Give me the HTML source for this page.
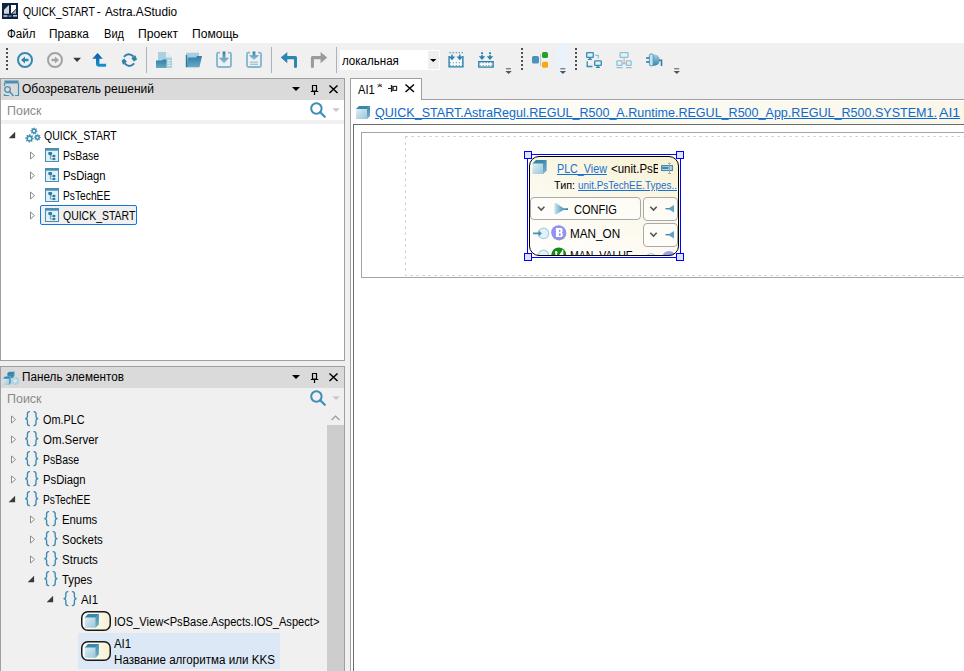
<!DOCTYPE html>
<html><head><meta charset="utf-8">
<style>
*{box-sizing:border-box}
html,body{margin:0;padding:0}
body{width:964px;height:671px;overflow:hidden;position:relative;background:#f0f0f0;font-family:"Liberation Sans",sans-serif}
.a{position:absolute}
.t{position:absolute;white-space:pre;transform-origin:0 0;font-family:"Liberation Sans",sans-serif}
svg{position:absolute;overflow:visible}
</style></head><body>
<!-- title + menu -->
<div class="a" style="left:0;top:0;width:964px;height:43px;background:#fff"></div>
<svg style="left:0;top:0" width="20" height="22">
 <rect x="2" y="3" width="16" height="16" fill="#0c2444"/>
 <polygon points="4,13.8 4,9.8 9,5 9,13.8" fill="#d3d7dd"/>
 <polygon points="11,5 16,5 16,8.8 11,13.8" fill="#ffffff"/>
 <polygon points="12.2,13.8 16,9.8 16,13.8" fill="#aab2be"/>
 <rect x="3.5" y="15.2" width="4" height="1.6" fill="#c5cad2"/>
 <rect x="8.5" y="15.5" width="3" height="1.2" fill="#9aa3b0"/>
 <rect x="13" y="15" width="4" height="1.6" fill="#c5cad2"/>
</svg>
<!-- toolbar -->
<div class="a" style="left:0;top:43px;width:964px;height:35px;background:#f0f0f0"></div>
<svg style="left:0;top:43px" width="964" height="35">
 <g fill="#505050">
  <rect x="6" y="5" width="2" height="2"/><rect x="6" y="9" width="2" height="2"/><rect x="6" y="13" width="2" height="2"/><rect x="6" y="17" width="2" height="2"/><rect x="6" y="21" width="2" height="2"/><rect x="6" y="25" width="2" height="2"/>
 </g>
 <!-- back -->
 <circle cx="25" cy="17" r="7" fill="none" stroke="#3589b3" stroke-width="2"/>
 <path d="M21,17 L25,13.5 L25,15.8 L28.5,15.8 L28.5,18.2 L25,18.2 L25,20.5 Z" fill="#2f86b0"/>
 <!-- forward -->
 <circle cx="55" cy="17" r="7" fill="none" stroke="#a3a3a3" stroke-width="2"/>
 <path d="M59,17 L55,13.5 L55,15.8 L51.5,15.8 L51.5,18.2 L55,18.2 L55,20.5 Z" fill="#a3a3a3"/>
 <path d="M73.2,14.7 L81,14.7 L77.1,18.9 Z" fill="#383838"/>
 <!-- up -->
 <defs><linearGradient id="upg" x1="0" y1="0" x2="0" y2="1"><stop offset="0" stop-color="#0a5aa0"/><stop offset="1" stop-color="#1a92d2"/></linearGradient></defs>
 <path d="M92.3,15.8 L97.6,9.9 L102.8,15.8 L99.4,15.8 L99.4,20.8 L106.1,20.8 L106.1,23.7 L99,23.7 Q96,23.7 96,20.8 L96,15.8 Z" fill="url(#upg)"/>
 <!-- refresh -->
 <path d="M123.9,13.9 Q128.5,8.8 133.6,13.6" fill="none" stroke="#2f80aa" stroke-width="2"/>
 <path d="M131.3,15.2 L135.3,12.3 L137.1,16.6 L134,18.6 Z" fill="#2f80aa"/>
 <path d="M134.2,20.3 Q129.5,25.5 124.6,20.4" fill="none" stroke="#2f80aa" stroke-width="2"/>
 <path d="M126.9,18.8 L122.9,21.7 L121.7,17.4 L124.2,15.5 Z" fill="#2f80aa"/>
 <rect x="146" y="4" width="1" height="26" fill="#aab2bf"/>
 <!-- new -->
 <path d="M158,9 L166,9 L172,14.5 L172,25 L158,25 Z" fill="#abd0e0"/>
 <path d="M166,9 L172,14.5 L166,14.5 Z" fill="#e2eff5"/>
 <rect x="167.5" y="17" width="3" height="1" fill="#e8f2f6"/><rect x="167.5" y="19.5" width="3" height="1" fill="#e8f2f6"/><rect x="167.5" y="22" width="3" height="1" fill="#e8f2f6"/>
 <defs>
  <linearGradient id="fg" x1="0" y1="0" x2="0" y2="1"><stop offset="0" stop-color="#2f7ea6"/><stop offset="1" stop-color="#68a9c6"/></linearGradient>
  <linearGradient id="fg2" x1="0" y1="0" x2="0" y2="1"><stop offset="0" stop-color="#2f7ea6"/><stop offset="1" stop-color="#9ac6d9"/></linearGradient>
  <linearGradient id="cube" x1="0" y1="0" x2="1" y2="1"><stop offset="0" stop-color="#eaf5f9"/><stop offset="1" stop-color="#8ec0d5"/></linearGradient>
  <linearGradient id="cubes" x1="0" y1="0" x2="0" y2="1"><stop offset="0" stop-color="#3b87ab"/><stop offset="1" stop-color="#7fb5cd"/></linearGradient>
 </defs>
 <path d="M156,17.5 L162,17.5 L163,16.5 L166.5,16.5 L166.5,25 L156,25 Z" fill="url(#fg)"/>
 <!-- open folder -->
 <path d="M186,9.7 L199,9.7 L199,24.2 L186,24.2 Z" fill="#a7cddf"/>
 <path d="M188,14.5 L196,14.5 L197,13 L202,13 L199.5,24.2 L186.5,24.2 Z" fill="url(#fg)"/>
 <rect x="185.8" y="12" width="1.4" height="12.2" fill="#2a78a0"/>
 <!-- save -->
 <path d="M220,9.6 L218.5,9.6 Q217,9.6 217,11.1 L217,22.5 Q217,24 218.5,24 L229.5,24 Q231,24 231,22.5 L231,11.1 Q231,9.6 229.5,9.6 L228,9.6" stroke="#86b8cf" stroke-width="1.9" fill="none"/>
 <path d="M222.6,8.5 L225.4,8.5 L225.4,14.8 L229,14.8 L224,20.5 L219,14.8 L222.6,14.8 Z" fill="url(#fg2)"/>
 <!-- save all -->
 <path d="M250,9.6 L248.5,9.6 Q247,9.6 247,11.1 L247,22.5 Q247,24 248.5,24 L259.5,24 Q261,24 261,22.5 L261,11.1 Q261,9.6 259.5,9.6 L258,9.6" stroke="#86b8cf" stroke-width="1.9" fill="none"/>
 <path d="M252.6,8.5 L255.4,8.5 L255.4,12.3 L259,12.3 L254,17 L249,12.3 L252.6,12.3 Z" fill="url(#fg2)"/>
 <rect x="250" y="18.7" width="8" height="0.9" fill="#7fb3cb"/><rect x="250" y="20.8" width="8" height="0.9" fill="#7fb3cb"/>
 <rect x="271" y="4" width="1" height="26" fill="#aab2bf"/>
 <!-- undo -->
 <path d="M280.7,14.5 L287.3,9 L287.3,13 L295.5,13 Q297,13 297,14.5 L297,23.5 Q297,25 295.5,25 Q294,25 294,23.5 L294,16.2 L287.3,16.2 L287.3,20.2 Z" fill="#2e86b0"/>
 <!-- redo -->
 <path d="M327.2,14.5 L320.6,9 L320.6,13 L312.4,13 Q310.9,13 310.9,14.5 L310.9,23.5 Q310.9,25 312.4,25 Q313.9,25 313.9,23.5 L313.9,16.2 L320.6,16.2 L320.6,20.2 Z" fill="#9a9a9a"/>
 <rect x="336" y="4" width="1" height="26" fill="#aab2bf"/>
 <!-- combo -->
 <rect x="340" y="7" width="100" height="20" fill="#fff"/>
 <rect x="428" y="8" width="11" height="18" fill="#efefef"/>
 <path d="M430,16 L436.4,16 L433.2,19 Z" fill="#000"/>
 <!-- import icons -->
 <rect x="449.8" y="17.5" width="12.4" height="5.7" fill="#fafcfd"/>
 <rect x="479.4" y="19.3" width="13.1" height="4.1" fill="#fafcfd"/>
 <g fill="#5f9fc0"><rect x="449.50" y="8.9" width="1.4" height="1.4"/><rect x="452.50" y="8.9" width="1.4" height="1.4"/><rect x="455.60" y="8.9" width="1.4" height="1.4"/><rect x="458.60" y="8.9" width="1.4" height="1.4"/><rect x="461.60" y="8.9" width="1.4" height="1.4"/><rect x="449.60" y="19.1" width="1.2" height="1.2"/><rect x="449.60" y="22.0" width="1.2" height="1.2"/><rect x="452.60" y="19.1" width="1.2" height="1.2"/><rect x="452.60" y="22.0" width="1.2" height="1.2"/><rect x="455.70" y="19.1" width="1.2" height="1.2"/><rect x="455.70" y="22.0" width="1.2" height="1.2"/><rect x="458.70" y="19.1" width="1.2" height="1.2"/><rect x="458.70" y="22.0" width="1.2" height="1.2"/><rect x="461.70" y="19.1" width="1.2" height="1.2"/><rect x="461.70" y="22.0" width="1.2" height="1.2"/><rect x="479.50" y="19.1" width="1.2" height="1.2"/><rect x="479.50" y="22.0" width="1.2" height="1.2"/><rect x="482.50" y="19.1" width="1.2" height="1.2"/><rect x="482.50" y="22.0" width="1.2" height="1.2"/><rect x="485.40" y="19.1" width="1.2" height="1.2"/><rect x="485.40" y="22.0" width="1.2" height="1.2"/><rect x="488.20" y="19.1" width="1.2" height="1.2"/><rect x="488.20" y="22.0" width="1.2" height="1.2"/><rect x="491.30" y="19.1" width="1.2" height="1.2"/><rect x="491.30" y="22.0" width="1.2" height="1.2"/></g>
 <g fill="#2d7fab">
  <path d="M448.4,13 L449.8,13 L449.8,23.2 L462.2,23.2 L462.2,13 L463.6,13 L463.6,24.6 L448.4,24.6 Z"/>
  <path d="M451.3,11.5 L452.7,11.5 L452.7,13.5 L455.2,13.5 L452,17.3 L448.8,13.5 L451.3,13.5 Z"/>
  <path d="M459.1,11.5 L460.5,11.5 L460.5,13.5 L463,13.5 L459.8,17.3 L456.6,13.5 L459.1,13.5 Z"/>
  <rect x="481" y="9.3" width="2" height="1.8"/><rect x="489" y="9.3" width="2" height="1.8"/>
  <path d="M481.3,12 L482.7,12 L482.7,13.3 L485.2,13.3 L482,16.9 L478.8,13.3 L481.3,13.3 Z"/>
  <path d="M489.3,12 L490.7,12 L490.7,13.3 L493.2,13.3 L490,16.9 L486.8,13.3 L489.3,13.3 Z"/>
  <path d="M478.1,18 L493.8,18 L493.8,24.7 L478.1,24.7 Z M479.4,19.3 L479.4,23.4 L492.5,23.4 L492.5,19.3 Z"/>
 </g>
 <!-- overflow chevrons -->
 <g fill="#555">
  <rect x="506" y="25.3" width="5" height="1"/><path d="M505.4,28 L511.8,28 L508.6,30.9 Z"/>
 </g>
 <g fill="#505050">
  <rect x="521" y="5" width="2" height="2"/><rect x="521" y="9" width="2" height="2"/><rect x="521" y="13" width="2" height="2"/><rect x="521" y="17" width="2" height="2"/><rect x="521" y="21" width="2" height="2"/><rect x="521" y="25" width="2" height="2"/>
 </g>
 <rect x="532" y="13" width="7" height="7.5" rx="1.5" fill="#4c93ba"/>
 <rect x="540" y="11" width="0.8" height="12" fill="#bbb"/>
 <rect x="542" y="9" width="6" height="6" rx="1.5" fill="#23a12d"/>
 <rect x="542" y="18.8" width="6" height="6" rx="1.5" fill="#f7a914"/>
 <rect x="556.5" y="1" width="11" height="32.5" rx="2" fill="#eaf2fb"/>
 <g fill="#555">
  <rect x="560.3" y="25.3" width="5" height="1"/><path d="M559.7,28 L566.1,28 L562.9,30.9 Z"/>
 </g>
 <g fill="#505050">
  <rect x="575" y="5" width="2" height="2"/><rect x="575" y="9" width="2" height="2"/><rect x="575" y="13" width="2" height="2"/><rect x="575" y="17" width="2" height="2"/><rect x="575" y="21" width="2" height="2"/><rect x="575" y="25" width="2" height="2"/>
 </g>
 <!-- network 1 -->
 <g>
  <rect x="586.7" y="9.7" width="6.6" height="4.6" rx="0.6" fill="#def1f9" stroke="#3a89b2" stroke-width="1.3"/>
  <rect x="589.2" y="14.8" width="1.6" height="1.4" fill="#3a89b2"/><rect x="587.8" y="15.8" width="4.2" height="1.2" rx="0.5" fill="#3a89b2"/>
  <rect x="594.7" y="17.8" width="6.6" height="4.6" rx="0.6" fill="#def1f9" stroke="#3a89b2" stroke-width="1.3"/>
  <rect x="597.2" y="22.9" width="1.6" height="1.4" fill="#3a89b2"/><rect x="595.8" y="23.8" width="4.2" height="1.2" rx="0.5" fill="#3a89b2"/>
  <path d="M595.2,12.4 L598.3,12.4 L598.3,15.6" stroke="#8fbfd5" stroke-width="1.2" fill="none"/>
  <path d="M587.2,18.3 L587.2,23.5 L592.5,23.5" stroke="#3a89b2" stroke-width="1.3" fill="none"/>
 </g>
 <!-- network 2 -->
 <g>
  <rect x="620.1" y="9.7" width="7.9" height="4.6" rx="0.6" fill="#e2f3fa" stroke="#8fc0d8" stroke-width="1.3"/>
  <path d="M624.1,14.7 L624.1,20.6 M622.4,20.6 L625.8,20.6" stroke="#c9b3ab" stroke-width="1.2"/>
  <rect x="616.9" y="17.8" width="5.1" height="4.6" rx="0.6" fill="#e2f3fa" stroke="#8fc0d8" stroke-width="1.3"/>
  <rect x="626.4" y="17.8" width="4.7" height="4.6" rx="0.6" fill="#e2f3fa" stroke="#8fc0d8" stroke-width="1.3"/>
  <rect x="616.3" y="24" width="6.3" height="1.2" rx="0.5" fill="#8fc0d8"/><rect x="625.8" y="24" width="5.9" height="1.2" rx="0.5" fill="#8fc0d8"/>
 </g>
 <!-- plug -->
 <defs><linearGradient id="plugg" x1="0" y1="0" x2="0" y2="1"><stop offset="0" stop-color="#a9d2e3"/><stop offset="1" stop-color="#3583ad"/></linearGradient></defs>
 <rect x="646.1" y="14.1" width="5.6" height="1.8" fill="#3a89b2"/><rect x="646.1" y="18" width="5.6" height="1.8" fill="#3a89b2"/>
 <path d="M652.5,10.9 Q659.5,10.9 659.8,17 Q659.5,22.9 652.5,22.9 Z" fill="url(#plugg)"/>
 <rect x="649.4" y="10.9" width="3.8" height="12" rx="1.6" fill="#c4e2ee" stroke="#4a93b8" stroke-width="0.9"/>
 <path d="M659,17.2 L661.5,17.2 L661.5,22.9" stroke="#2f80aa" stroke-width="1.6" fill="none"/>
 <g fill="#555">
  <rect x="674.2" y="25.3" width="5" height="1"/><path d="M673.6,28 L680,28 L676.8,30.9 Z"/>
 </g>
</svg>

<!-- Solution explorer panel -->
<div class="a" style="left:0;top:78px;width:345px;height:283px;border:1px solid #a0a0a0;background:#fff"></div>
<div class="a" style="left:1px;top:79px;width:343px;height:21px;background:#dadada"></div>
<div class="a" style="left:1px;top:120px;width:343px;height:4px;background:#f0f0f0"></div>
<!-- Toolbox panel -->
<div class="a" style="left:0;top:366px;width:345px;height:320px;border:1px solid #a0a0a0;background:#f0f0f0"></div>
<div class="a" style="left:1px;top:367px;width:343px;height:21px;background:#dadada"></div>
<div class="a" style="left:327px;top:425px;width:17px;height:260px;background:#cdcdcd"></div>
<svg style="left:0;top:0" width="964" height="671">
 <!-- explorer header icon -->
 <path d="M4.5,82 L18.5,82" stroke="#4a90b3" stroke-width="3"/>
 <path d="M4.5,83 L4.5,86 M18.5,83 L18.5,95.5 L15,95.5 M4.5,94 L4.5,95.5 L9,95.5" stroke="#4a90b3" stroke-width="1.2" fill="none"/>
 <circle cx="7.5" cy="89.5" r="2.8" fill="none" stroke="#4a90b3" stroke-width="1.3"/>
 <path d="M9.5,91.5 L13.5,96" stroke="#4a90b3" stroke-width="1.5"/>
 <!-- header buttons -->
 <path d="M292,87 L300,87 L296,91 Z" fill="#000"/>
 <path d="M312,85.5 L317,85.5 M312.5,85.5 L312.5,91 L316.5,91 L316.5,85.5 M310.8,91.5 L318.3,91.5 M314.5,91.5 L314.5,95" stroke="#000" stroke-width="1.2" fill="none"/>
 <path d="M329.5,85.5 L337.5,93 M337.5,85.5 L329.5,93" stroke="#000" stroke-width="1.5"/>
 <!-- search -->
 <circle cx="316.4" cy="108.5" r="5.2" fill="none" stroke="#3a8fb5" stroke-width="2"/>
 <path d="M320.2,112.3 L324.8,116.8" stroke="#3a8fb5" stroke-width="2.2" stroke-linecap="round"/>
 <path d="M332.3,108.2 L339.9,108.2 L336.1,112 Z" fill="#c8c8c8"/>
 <!-- toolbox header -->
 <path d="M292,375 L300,375 L296,379 Z" fill="#000"/>
 <path d="M312,373.5 L317,373.5 M312.5,373.5 L312.5,379 L316.5,379 L316.5,373.5 M310.8,379.5 L318.3,379.5 M314.5,379.5 L314.5,383" stroke="#000" stroke-width="1.2" fill="none"/>
 <path d="M329.5,373.5 L337.5,381 M337.5,373.5 L329.5,381" stroke="#000" stroke-width="1.5"/>
 <circle cx="316.4" cy="396.5" r="5.2" fill="none" stroke="#3a8fb5" stroke-width="2"/>
 <path d="M320.2,400.3 L324.8,404.8" stroke="#3a8fb5" stroke-width="2.2" stroke-linecap="round"/>
 <path d="M332.3,396.2 L339.9,396.2 L336.1,400 Z" fill="#c8c8c8"/>
 <path d="M331.5,420 L335.5,416 L339.5,420" stroke="#9a9a9a" stroke-width="1.2" fill="none"/>
 <!-- toolbox header icon -->
 <defs><radialGradient id="sph" cx="0.5" cy="0.5" r="0.5"><stop offset="0" stop-color="#dff0f7"/><stop offset="1" stop-color="#9dcadd"/></radialGradient></defs>
 <path d="M7.4,373.5 L9,371.7 L14.4,371.7 L14.4,376 L12.5,378 L7.4,378 Z" fill="#3f8bb2"/>
 <path d="M7.4,373.5 L12.5,373.5 L14.4,371.7" stroke="#2a78a2" stroke-width="0.6" fill="none"/>
 <path d="M3.1,378.5 L5,376.5 L10.8,376.5 L10.8,383 L9,385 L3.1,385 Z" fill="url(#cube)"/>
 <path d="M3.1,378.5 L5,376.5 L10.8,376.5 L9,378.8 L3.1,378.8 Z" fill="#3a86ad"/>
 <path d="M9,378.8 L10.8,376.5 L10.8,383 L9,385 Z" fill="#5b9fc1"/>
 <circle cx="15.1" cy="380.8" r="3.9" fill="url(#sph)"/>
</svg>
<!-- Editor -->
<div class="a" style="left:350px;top:78px;width:72px;height:22px;border:1px solid #a0a0a0;border-bottom:none;background:#fff"></div>
<div class="a" style="left:350px;top:99px;width:614px;height:572px;border-left:1px solid #a0a0a0;background:#fff"></div>
<div class="a" style="left:421px;top:99px;width:543px;height:1px;background:#a0a0a0"></div>
<div class="a" style="left:351px;top:100px;width:613px;height:1px;background:#fff"></div>
<div class="a" style="left:351px;top:101px;width:613px;height:23px;background:linear-gradient(to right,#ffffff 0%,#fdfcf5 30%,#faf7e9 100%)"></div>
<div class="a" style="left:353px;top:124px;width:611px;height:547px;border-left:1px solid #6b6b6b;border-top:1px solid #6b6b6b;background:#fff"></div>
<div class="a" style="left:361px;top:132px;width:603px;height:146px;border-left:1px solid #a5a5a5;border-top:1px solid #a5a5a5;border-bottom:1px solid #a5a5a5"></div>
<svg style="left:0;top:0" width="964" height="671">
 <path d="M405.5,136.5 L964,136.5 M405.5,136.5 L405.5,275.5 L964,275.5" stroke="#c8c8c8" stroke-dasharray="2.2,3.8" fill="none"/>
 <!-- tab icons -->
 <path d="M379.8,83.6 L379.8,86.2 M377.6,84.6 L382,86.8 M382,84.6 L377.6,86.8" stroke="#333" stroke-width="0.9"/>
 <path d="M388,88.5 L391,88.5" stroke="#222" stroke-width="1.1"/>
 <path d="M391.5,85 L391.5,92" stroke="#222" stroke-width="1.2"/>
 <rect x="392" y="86.4" width="4.6" height="4" fill="none" stroke="#222" stroke-width="1.1"/>
 <rect x="392" y="86.4" width="2" height="4" fill="#555"/>
 <path d="M405.5,84.5 L414,92 M414,84.5 L405.5,92" stroke="#000" stroke-width="1.5"/>
 <!-- breadcrumb cube -->
 <path d="M356,109 L359,106 L370,106 L370,116 L367,119 L356,119 Z" fill="url(#cube)"/>
 <path d="M356,109 L359,106 L370,106 L367,109 Z" fill="#3a87a8"/>
 <path d="M367,109 L370,106 L370,116 L367,119 Z" fill="url(#cubes)"/>
</svg>
<!-- explorer tree icons -->
<div class="a" style="left:40px;top:205px;width:97px;height:20px;border:1px solid #0f78d8;border-radius:2px;background:#f0f0f0"></div>
<svg style="left:0;top:0" width="964" height="671">
 <defs>
  <linearGradient id="cube2" x1="0" y1="0" x2="1" y2="1"><stop offset="0" stop-color="#eaf5f9"/><stop offset="1" stop-color="#8ec0d5"/></linearGradient>
  <linearGradient id="cubes2" x1="0" y1="0" x2="0" y2="1"><stop offset="0" stop-color="#3b87ab"/><stop offset="1" stop-color="#7fb5cd"/></linearGradient>
  <linearGradient id="cream" x1="0" y1="0" x2="1" y2="0"><stop offset="0" stop-color="#ffffff"/><stop offset="1" stop-color="#f6f1d3"/></linearGradient>
  
  
  
  
  
 </defs>
 <g transform="translate(8.7,131.8)"><path d="M6.5,0 L6.5,6.5 L0,6.5 Z" fill="#3a3a3a"/></g>
 <!-- gears -->
 <g><polygon points="37.60,131.00 37.53,131.70 36.39,131.99 36.16,132.44 36.55,133.55 36.00,133.99 34.99,133.39 34.51,133.54 34.00,134.60 33.30,134.53 33.01,133.39 32.56,133.16 31.45,133.55 31.01,133.00 31.61,131.99 31.46,131.51 30.40,131.00 30.47,130.30 31.61,130.01 31.84,129.56 31.45,128.45 32.00,128.01 33.01,128.61 33.49,128.46 34.00,127.40 34.70,127.47 34.99,128.61 35.44,128.84 36.55,128.45 36.99,129.00 36.39,130.01 36.54,130.49" fill="#4590b6"/><circle cx="34" cy="131" r="1.1" fill="#fff"/><polygon points="33.80,138.40 33.72,139.24 32.36,139.58 32.07,140.12 32.54,141.44 31.89,141.98 30.68,141.26 30.10,141.44 29.50,142.70 28.66,142.62 28.32,141.26 27.78,140.97 26.46,141.44 25.92,140.79 26.64,139.58 26.46,139.00 25.20,138.40 25.28,137.56 26.64,137.22 26.93,136.68 26.46,135.36 27.11,134.82 28.32,135.54 28.90,135.36 29.50,134.10 30.34,134.18 30.68,135.54 31.22,135.83 32.54,135.36 33.08,136.01 32.36,137.22 32.54,137.80" fill="#4590b6"/><circle cx="29.5" cy="138.4" r="1.5" fill="#fff"/><polygon points="40.90,137.40 40.83,138.08 39.73,138.36 39.50,138.80 39.87,139.87 39.34,140.31 38.36,139.73 37.89,139.87 37.40,140.90 36.72,140.83 36.44,139.73 36.00,139.50 34.93,139.87 34.49,139.34 35.07,138.36 34.93,137.89 33.90,137.40 33.97,136.72 35.07,136.44 35.30,136.00 34.93,134.93 35.46,134.49 36.44,135.07 36.91,134.93 37.40,133.90 38.08,133.97 38.36,135.07 38.80,135.30 39.87,134.93 40.31,135.46 39.73,136.44 39.87,136.91" fill="#4590b6"/><circle cx="37.4" cy="137.4" r="1.0" fill="#fff"/></g>
 <g transform="translate(30,151.5)"><path d="M0.5,0.5 L4.5,4 L0.5,7.5 Z" fill="#fff" stroke="#8a8a8a" stroke-width="1"/></g><g transform="translate(45,148)">
   <rect x="0.5" y="0.5" width="13" height="13" fill="#e3f0f6" stroke="#4a8fb3" stroke-width="1"/>
   <rect x="0.5" y="0.5" width="13" height="2.2" fill="#4a8fb3"/>
   <rect x="3.3" y="3.9" width="3.8" height="3" rx="0.9" fill="#2f7aa3"/>
   <path d="M5.3,6.8 L5.3,11 L8,11 M5.3,8 L8,8" stroke="#4a8db0" stroke-width="0.8" fill="none"/>
   <ellipse cx="9" cy="8" rx="1.5" ry="1.3" fill="#2f7aa3"/><ellipse cx="9" cy="11" rx="1.5" ry="1.3" fill="#2f7aa3"/>
  </g>
 <g transform="translate(30,171.5)"><path d="M0.5,0.5 L4.5,4 L0.5,7.5 Z" fill="#fff" stroke="#8a8a8a" stroke-width="1"/></g><g transform="translate(45,168)">
   <rect x="0.5" y="0.5" width="13" height="13" fill="#e3f0f6" stroke="#4a8fb3" stroke-width="1"/>
   <rect x="0.5" y="0.5" width="13" height="2.2" fill="#4a8fb3"/>
   <rect x="3.3" y="3.9" width="3.8" height="3" rx="0.9" fill="#2f7aa3"/>
   <path d="M5.3,6.8 L5.3,11 L8,11 M5.3,8 L8,8" stroke="#4a8db0" stroke-width="0.8" fill="none"/>
   <ellipse cx="9" cy="8" rx="1.5" ry="1.3" fill="#2f7aa3"/><ellipse cx="9" cy="11" rx="1.5" ry="1.3" fill="#2f7aa3"/>
  </g>
 <g transform="translate(30,191.5)"><path d="M0.5,0.5 L4.5,4 L0.5,7.5 Z" fill="#fff" stroke="#8a8a8a" stroke-width="1"/></g><g transform="translate(45,188)">
   <rect x="0.5" y="0.5" width="13" height="13" fill="#e3f0f6" stroke="#4a8fb3" stroke-width="1"/>
   <rect x="0.5" y="0.5" width="13" height="2.2" fill="#4a8fb3"/>
   <rect x="3.3" y="3.9" width="3.8" height="3" rx="0.9" fill="#2f7aa3"/>
   <path d="M5.3,6.8 L5.3,11 L8,11 M5.3,8 L8,8" stroke="#4a8db0" stroke-width="0.8" fill="none"/>
   <ellipse cx="9" cy="8" rx="1.5" ry="1.3" fill="#2f7aa3"/><ellipse cx="9" cy="11" rx="1.5" ry="1.3" fill="#2f7aa3"/>
  </g>
 <g transform="translate(30,211.5)"><path d="M0.5,0.5 L4.5,4 L0.5,7.5 Z" fill="#fff" stroke="#8a8a8a" stroke-width="1"/></g><g transform="translate(45,208)">
   <rect x="0.5" y="0.5" width="13" height="13" fill="#e3f0f6" stroke="#4a8fb3" stroke-width="1"/>
   <rect x="0.5" y="0.5" width="13" height="2.2" fill="#4a8fb3"/>
   <rect x="3.3" y="3.9" width="3.8" height="3" rx="0.9" fill="#2f7aa3"/>
   <path d="M5.3,6.8 L5.3,11 L8,11 M5.3,8 L8,8" stroke="#4a8db0" stroke-width="0.8" fill="none"/>
   <ellipse cx="9" cy="8" rx="1.5" ry="1.3" fill="#2f7aa3"/><ellipse cx="9" cy="11" rx="1.5" ry="1.3" fill="#2f7aa3"/>
  </g>
 <!-- toolbox tree -->
 <g transform="translate(11,415.5)"><path d="M0.5,0.5 L4.5,4 L0.5,7.5 Z" fill="#fff" stroke="#8a8a8a" stroke-width="1"/></g>
 <g transform="translate(11,435.5)"><path d="M0.5,0.5 L4.5,4 L0.5,7.5 Z" fill="#fff" stroke="#8a8a8a" stroke-width="1"/></g>
 <g transform="translate(11,455.5)"><path d="M0.5,0.5 L4.5,4 L0.5,7.5 Z" fill="#fff" stroke="#8a8a8a" stroke-width="1"/></g>
 <g transform="translate(11,475.5)"><path d="M0.5,0.5 L4.5,4 L0.5,7.5 Z" fill="#fff" stroke="#8a8a8a" stroke-width="1"/></g>
 <g transform="translate(8.6,495.8)"><path d="M6.5,0 L6.5,6.5 L0,6.5 Z" fill="#3a3a3a"/></g>
 <g transform="translate(30,515.5)"><path d="M0.5,0.5 L4.5,4 L0.5,7.5 Z" fill="#fff" stroke="#8a8a8a" stroke-width="1"/></g>
 <g transform="translate(30,535.5)"><path d="M0.5,0.5 L4.5,4 L0.5,7.5 Z" fill="#fff" stroke="#8a8a8a" stroke-width="1"/></g>
 <g transform="translate(30,555.5)"><path d="M0.5,0.5 L4.5,4 L0.5,7.5 Z" fill="#fff" stroke="#8a8a8a" stroke-width="1"/></g>
 <g transform="translate(27.6,575.8)"><path d="M6.5,0 L6.5,6.5 L0,6.5 Z" fill="#3a3a3a"/></g>
 <g transform="translate(46.6,595.8)"><path d="M6.5,0 L6.5,6.5 L0,6.5 Z" fill="#3a3a3a"/></g>
</svg>
<div class="a" style="left:78px;top:633px;width:202px;height:36px;background:#dce8f6"></div>
<svg style="left:0;top:0" width="964" height="671">
 <g transform="translate(81,611)">
   <rect x="0.75" y="0.75" width="28.5" height="18.5" rx="6" fill="url(#cream)" stroke="#1a1a1a" stroke-width="1.5"/>
   <path d="M3.7,6.5 L7,3 L17.8,3 L17.8,13.5 L14.5,16.8 L3.7,16.8 Z" fill="url(#cube2)"/>
   <path d="M3.7,6.5 L7,3 L17.8,3 L14.5,6.5 Z" fill="#3a87a8"/>
   <path d="M14.5,6.5 L17.8,3 L17.8,13.5 L14.5,16.8 Z" fill="url(#cubes2)"/>
  </g>
 <g transform="translate(81,641)">
   <rect x="0.75" y="0.75" width="28.5" height="18.5" rx="6" fill="url(#cream)" stroke="#1a1a1a" stroke-width="1.5"/>
   <path d="M3.7,6.5 L7,3 L17.8,3 L17.8,13.5 L14.5,16.8 L3.7,16.8 Z" fill="url(#cube2)"/>
   <path d="M3.7,6.5 L7,3 L17.8,3 L14.5,6.5 Z" fill="#3a87a8"/>
   <path d="M14.5,6.5 L17.8,3 L17.8,13.5 L14.5,16.8 Z" fill="url(#cubes2)"/>
  </g>
</svg>
<svg style="left:0;top:0" width="964" height="671"><defs></defs>
<g transform="translate(24,411)" fill="none" stroke="#3a8ab2" stroke-width="1.35" stroke-linecap="round"><path d="M5.4,0.6 Q3.4,0.8 3.4,3 L3.4,5.8 Q3.4,7.3 1.2,7.6 Q3.4,7.9 3.4,9.4 L3.4,12.2 Q3.4,14.4 5.4,14.6"/><path d="M10,0.6 Q12,0.8 12,3 L12,5.8 Q12,7.3 14.2,7.6 Q12,7.9 12,9.4 L12,12.2 Q12,14.4 10,14.6"/></g>
<g transform="translate(24,431)" fill="none" stroke="#3a8ab2" stroke-width="1.35" stroke-linecap="round"><path d="M5.4,0.6 Q3.4,0.8 3.4,3 L3.4,5.8 Q3.4,7.3 1.2,7.6 Q3.4,7.9 3.4,9.4 L3.4,12.2 Q3.4,14.4 5.4,14.6"/><path d="M10,0.6 Q12,0.8 12,3 L12,5.8 Q12,7.3 14.2,7.6 Q12,7.9 12,9.4 L12,12.2 Q12,14.4 10,14.6"/></g>
<g transform="translate(24,451)" fill="none" stroke="#3a8ab2" stroke-width="1.35" stroke-linecap="round"><path d="M5.4,0.6 Q3.4,0.8 3.4,3 L3.4,5.8 Q3.4,7.3 1.2,7.6 Q3.4,7.9 3.4,9.4 L3.4,12.2 Q3.4,14.4 5.4,14.6"/><path d="M10,0.6 Q12,0.8 12,3 L12,5.8 Q12,7.3 14.2,7.6 Q12,7.9 12,9.4 L12,12.2 Q12,14.4 10,14.6"/></g>
<g transform="translate(24,471)" fill="none" stroke="#3a8ab2" stroke-width="1.35" stroke-linecap="round"><path d="M5.4,0.6 Q3.4,0.8 3.4,3 L3.4,5.8 Q3.4,7.3 1.2,7.6 Q3.4,7.9 3.4,9.4 L3.4,12.2 Q3.4,14.4 5.4,14.6"/><path d="M10,0.6 Q12,0.8 12,3 L12,5.8 Q12,7.3 14.2,7.6 Q12,7.9 12,9.4 L12,12.2 Q12,14.4 10,14.6"/></g>
<g transform="translate(24,491)" fill="none" stroke="#3a8ab2" stroke-width="1.35" stroke-linecap="round"><path d="M5.4,0.6 Q3.4,0.8 3.4,3 L3.4,5.8 Q3.4,7.3 1.2,7.6 Q3.4,7.9 3.4,9.4 L3.4,12.2 Q3.4,14.4 5.4,14.6"/><path d="M10,0.6 Q12,0.8 12,3 L12,5.8 Q12,7.3 14.2,7.6 Q12,7.9 12,9.4 L12,12.2 Q12,14.4 10,14.6"/></g>
<g transform="translate(43.2,511)" fill="none" stroke="#3a8ab2" stroke-width="1.35" stroke-linecap="round"><path d="M5.4,0.6 Q3.4,0.8 3.4,3 L3.4,5.8 Q3.4,7.3 1.2,7.6 Q3.4,7.9 3.4,9.4 L3.4,12.2 Q3.4,14.4 5.4,14.6"/><path d="M10,0.6 Q12,0.8 12,3 L12,5.8 Q12,7.3 14.2,7.6 Q12,7.9 12,9.4 L12,12.2 Q12,14.4 10,14.6"/></g>
<g transform="translate(43.2,531)" fill="none" stroke="#3a8ab2" stroke-width="1.35" stroke-linecap="round"><path d="M5.4,0.6 Q3.4,0.8 3.4,3 L3.4,5.8 Q3.4,7.3 1.2,7.6 Q3.4,7.9 3.4,9.4 L3.4,12.2 Q3.4,14.4 5.4,14.6"/><path d="M10,0.6 Q12,0.8 12,3 L12,5.8 Q12,7.3 14.2,7.6 Q12,7.9 12,9.4 L12,12.2 Q12,14.4 10,14.6"/></g>
<g transform="translate(43.2,551)" fill="none" stroke="#3a8ab2" stroke-width="1.35" stroke-linecap="round"><path d="M5.4,0.6 Q3.4,0.8 3.4,3 L3.4,5.8 Q3.4,7.3 1.2,7.6 Q3.4,7.9 3.4,9.4 L3.4,12.2 Q3.4,14.4 5.4,14.6"/><path d="M10,0.6 Q12,0.8 12,3 L12,5.8 Q12,7.3 14.2,7.6 Q12,7.9 12,9.4 L12,12.2 Q12,14.4 10,14.6"/></g>
<g transform="translate(43.2,571)" fill="none" stroke="#3a8ab2" stroke-width="1.35" stroke-linecap="round"><path d="M5.4,0.6 Q3.4,0.8 3.4,3 L3.4,5.8 Q3.4,7.3 1.2,7.6 Q3.4,7.9 3.4,9.4 L3.4,12.2 Q3.4,14.4 5.4,14.6"/><path d="M10,0.6 Q12,0.8 12,3 L12,5.8 Q12,7.3 14.2,7.6 Q12,7.9 12,9.4 L12,12.2 Q12,14.4 10,14.6"/></g>
<g transform="translate(62.4,591)" fill="none" stroke="#3a8ab2" stroke-width="1.35" stroke-linecap="round"><path d="M5.4,0.6 Q3.4,0.8 3.4,3 L3.4,5.8 Q3.4,7.3 1.2,7.6 Q3.4,7.9 3.4,9.4 L3.4,12.2 Q3.4,14.4 5.4,14.6"/><path d="M10,0.6 Q12,0.8 12,3 L12,5.8 Q12,7.3 14.2,7.6 Q12,7.9 12,9.4 L12,12.2 Q12,14.4 10,14.6"/></g>
</svg>
<!-- node -->
<div class="a" style="left:529px;top:156px;width:150px;height:100px;border-radius:10px;overflow:hidden;background:linear-gradient(200deg,#f7f1d2 0%,#fbf8ea 45%,#ffffff 100%)">
 <div class="a" style="left:1px;top:41px;width:111px;height:23px;border:1px solid #a9a9a9;border-radius:4px;background:rgba(255,255,255,0.55)"></div>
 <div class="a" style="left:114px;top:41px;width:35px;height:24px;border:1px solid #a9a9a9;border-radius:4px;background:rgba(255,255,255,0.55)"></div>
 <div class="a" style="left:114px;top:67px;width:35px;height:24px;border:1px solid #a9a9a9;border-radius:4px;background:rgba(255,255,255,0.55)"></div>
 <div class="t" style="left:28.0px;top:7px;font-size:12px;line-height:12px;color:#1a6fd0;transform:scaleX(0.8940);text-decoration:underline;">PLC_View</div>
<div class="a" style="left:0;top:0;width:129.20000000000005px;height:40px;overflow:hidden"><div class="t" style="left:81.7px;top:7px;font-size:12px;line-height:12px;color:#000;transform:scaleX(0.9565);">&lt;unit.PsB</div></div>
<div class="t" style="left:24.9px;top:24px;font-size:11px;line-height:11px;color:#000;transform:scaleX(0.9850);">Тип:</div>
<div class="t" style="left:48.5px;top:24px;font-size:11px;line-height:11px;color:#1a6fd0;transform:scaleX(0.8986);text-decoration:underline;">unit.PsTechEE.Types..</div>
<div class="t" style="left:44.7px;top:48px;font-size:12px;line-height:12px;color:#000;transform:scaleX(0.9196);">CONFIG</div>
<div class="t" style="left:41.1px;top:72px;font-size:12px;line-height:12px;color:#000;transform:scaleX(0.9773);">MAN_ON</div>
<div class="t" style="left:41.1px;top:94px;font-size:12px;line-height:12px;color:#000;transform:scaleX(0.8756);">MAN_VALUE</div>
 <svg style="left:0;top:0" width="151" height="100">
  <g transform="translate(3.5,4)">
   <path d="M0,3.5 L3.5,0 L14,0 L14,10.5 L10.5,14 L0,14 Z" fill="url(#cube2)"/>
   <path d="M0,3.5 L3.5,0 L14,0 L10.5,3.5 Z" fill="#3a87a8"/>
   <path d="M10.5,3.5 L14,0 L14,10.5 L10.5,14 Z" fill="url(#cubes2)"/>
  </g>
  <!-- slider icon -->
  <rect x="132.6" y="9.6" width="10.8" height="4.9" fill="#b5d9e8" stroke="#3a8ab3" stroke-width="1.1"/>
  <rect x="133.2" y="10.9" width="6.3" height="2.1" fill="#3a8ab3"/>
  <path d="M140.5,7.3 L140.5,17.5 M139,7.3 L142,7.3 M139,17.5 L142,17.5" stroke="#a0a0a0" stroke-width="0.9"/>
  <!-- chevrons -->
  <path d="M9,50.8 L12.2,54 L15.4,50.8" stroke="#555" stroke-width="1.6" fill="none"/>
  <path d="M121.3,50.8 L124.5,54 L127.7,50.8" stroke="#555" stroke-width="1.6" fill="none"/>
  <path d="M121.3,76.8 L124.5,80 L127.7,76.8" stroke="#555" stroke-width="1.6" fill="none"/>
  <!-- config icon -->
  <defs><linearGradient id="cfg" x1="0" y1="0" x2="1" y2="0"><stop offset="0" stop-color="#cfe6f0"/><stop offset="0.5" stop-color="#6aa9c8"/><stop offset="1" stop-color="#2e7fab"/></linearGradient></defs>
  <path d="M25.4,47.3 L27.4,47.3 L34.5,52.3 L39,52.3 L39,53.9 L34.5,53.9 L27.4,58.3 L25.4,58.3 Z" fill="url(#cfg)"/>
  <!-- left arrows -->
  <path d="M145,49 L145,56.5 L139,52.7 Z" fill="#5fa4c4"/>
  <rect x="136.5" y="52" width="4" height="1.4" fill="#3f8db5"/>
  <path d="M145,75 L145,82.5 L139,78.7 Z" fill="#5fa4c4"/>
  <rect x="136.5" y="78" width="4" height="1.4" fill="#3f8db5"/>
  <!-- connector -->
  <circle cx="14.5" cy="77.4" r="5.2" fill="#e3f1f8" stroke="#a8d0e2" stroke-width="1.2"/>
  <path d="M4,77.4 L11,77.4" stroke="#4a93b8" stroke-width="1.6"/>
  <path d="M13,77.4 L9.5,74.5 L9.5,80.3 Z" fill="#4a93b8"/>
  <!-- B -->
  <circle cx="30.1" cy="77.1" r="7.3" fill="#4a4a70" opacity="0.55"/>
  <circle cx="29.5" cy="76.5" r="7.3" fill="#9292f4"/>
  <path d="M26.9,72 L32.5,72 L33.5,73.2 L33.5,75.8 L32.8,76.5 L33.7,77.4 L33.7,80 L32.7,81 L26.9,81 Z" fill="#fff"/>
  <path d="M30,73.5 L32,74.9 L30,76.2 Z" fill="#9292f4"/>
  <rect x="30" y="77.3" width="1.6" height="2.5" fill="#9292f4"/>
  <!-- last row -->
  <circle cx="14.5" cy="99.4" r="5.2" fill="#e3f1f8" stroke="#a8d0e2" stroke-width="1.2"/>
  <circle cx="29.8" cy="98.8" r="7.4" fill="#128a14"/>
  <path d="M26,96.5 L28.5,96.5 M27.2,95 L27.2,100 M30.5,100 L33.5,95.5 L33.5,100" stroke="#fff" stroke-width="1.6" fill="none"/>
  <circle cx="122" cy="102.5" r="5" fill="#e3f1f8" stroke="#a8d0e2" stroke-width="1.2"/>
  <circle cx="140" cy="102" r="7" fill="#9d9df0"/>
 </svg>
</div>
<div class="a" style="left:529px;top:156px;width:150px;height:100px;border:1px solid #000;border-radius:10px"></div>
<div class="a" style="left:527px;top:154px;width:154px;height:104px;border:1px solid #0000ff"></div>
<div class="a" style="left:524px;top:151px;width:8px;height:8px;border:1px solid #0000ff;background:#e2e2f6"></div>
<div class="a" style="left:676px;top:151px;width:8px;height:8px;border:1px solid #0000ff;background:#e2e2f6"></div>
<div class="a" style="left:524px;top:253px;width:8px;height:8px;border:1px solid #0000ff;background:#e2e2f6"></div>
<div class="a" style="left:676px;top:253px;width:8px;height:8px;border:1px solid #0000ff;background:#e2e2f6"></div>

<div class="t" style="left:23.1px;top:6px;font-size:12px;line-height:12px;color:#000;transform:scaleX(0.8656);">QUICK_START</div>
<div class="t" style="left:96.8px;top:6px;font-size:12px;line-height:12px;color:#000;transform:scaleX(1.0000);">-</div>
<div class="t" style="left:104.6px;top:6px;font-size:12px;line-height:12px;color:#000;transform:scaleX(0.9838);">Astra.AStudio</div>
<div class="t" style="left:6.8px;top:28px;font-size:12px;line-height:12px;color:#000;transform:scaleX(0.9644);">Файл</div>
<div class="t" style="left:49.3px;top:28px;font-size:12px;line-height:12px;color:#000;transform:scaleX(0.9836);">Правка</div>
<div class="t" style="left:103.6px;top:28px;font-size:12px;line-height:12px;color:#000;transform:scaleX(0.9219);">Вид</div>
<div class="t" style="left:137.6px;top:28px;font-size:12px;line-height:12px;color:#000;transform:scaleX(1.0122);">Проект</div>
<div class="t" style="left:191.6px;top:28px;font-size:12px;line-height:12px;color:#000;transform:scaleX(1.0053);">Помощь</div>
<div class="t" style="left:341.8px;top:55px;font-size:12px;line-height:12px;color:#000;transform:scaleX(0.9628);">локальная</div>
<div class="t" style="left:21.5px;top:83px;font-size:12px;line-height:12px;color:#000;transform:scaleX(0.9988);">Обозреватель решений</div>
<div class="t" style="left:7.1px;top:105px;font-size:12px;line-height:12px;color:#8a8a8a;transform:scaleX(1.0383);">Поиск</div>
<div class="t" style="left:43.8px;top:130px;font-size:12px;line-height:12px;color:#000;transform:scaleX(0.8778);">QUICK_START</div>
<div class="t" style="left:63.1px;top:150px;font-size:12px;line-height:12px;color:#000;transform:scaleX(0.8722);">PsBase</div>
<div class="t" style="left:63.1px;top:170px;font-size:12px;line-height:12px;color:#000;transform:scaleX(0.9400);">PsDiagn</div>
<div class="t" style="left:63.1px;top:190px;font-size:12px;line-height:12px;color:#000;transform:scaleX(0.8536);">PsTechEE</div>
<div class="t" style="left:62.8px;top:210px;font-size:12px;line-height:12px;color:#000;transform:scaleX(0.8717);">QUICK_START</div>
<div class="t" style="left:22.0px;top:371px;font-size:12px;line-height:12px;color:#000;transform:scaleX(0.9778);">Панель элементов</div>
<div class="t" style="left:7.1px;top:393px;font-size:12px;line-height:12px;color:#8a8a8a;transform:scaleX(1.0383);">Поиск</div>
<div class="t" style="left:42.8px;top:414px;font-size:12px;line-height:12px;color:#000;transform:scaleX(0.9041);">Om.PLC</div>
<div class="t" style="left:42.8px;top:434px;font-size:12px;line-height:12px;color:#000;transform:scaleX(0.9541);">Om.Server</div>
<div class="t" style="left:42.8px;top:454px;font-size:12px;line-height:12px;color:#000;transform:scaleX(0.8722);">PsBase</div>
<div class="t" style="left:42.8px;top:474px;font-size:12px;line-height:12px;color:#000;transform:scaleX(0.9400);">PsDiagn</div>
<div class="t" style="left:42.8px;top:494px;font-size:12px;line-height:12px;color:#000;transform:scaleX(0.8536);">PsTechEE</div>
<div class="t" style="left:61.7px;top:514px;font-size:12px;line-height:12px;color:#000;transform:scaleX(0.9434);">Enums</div>
<div class="t" style="left:61.8px;top:534px;font-size:12px;line-height:12px;color:#000;transform:scaleX(0.9571);">Sockets</div>
<div class="t" style="left:61.8px;top:554px;font-size:12px;line-height:12px;color:#000;transform:scaleX(0.9603);">Structs</div>
<div class="t" style="left:61.8px;top:574px;font-size:12px;line-height:12px;color:#000;transform:scaleX(0.9447);">Types</div>
<div class="t" style="left:80.5px;top:594px;font-size:12px;line-height:12px;color:#000;transform:scaleX(0.9521);">AI1</div>
<div class="t" style="left:114.0px;top:616px;font-size:12px;line-height:12px;color:#000;transform:scaleX(0.9257);">IOS_View&lt;PsBase.Aspects.IOS_Aspect&gt;</div>
<div class="t" style="left:113.6px;top:638px;font-size:12px;line-height:12px;color:#000;transform:scaleX(0.9521);">AI1</div>
<div class="t" style="left:113.5px;top:654px;font-size:12px;line-height:12px;color:#000;transform:scaleX(0.9679);">Название алгоритма или KKS</div>
<div class="t" style="left:357.8px;top:84px;font-size:12px;line-height:12px;color:#000;transform:scaleX(0.9286);">AI1</div>
<div class="t" style="left:374.5px;top:106px;font-size:13px;line-height:13px;color:#0e6ad0;transform:scaleX(0.9646);text-decoration:underline;">QUICK_START.AstraRegul.REGUL_R500_A.Runtime.REGUL_R500_App.REGUL_R500.SYSTEM1.</div>
<div class="t" style="left:939.3px;top:106px;font-size:13px;line-height:13px;color:#0e6ad0;transform:scaleX(1.0856);text-decoration:underline;">AI1</div>
</body></html>
